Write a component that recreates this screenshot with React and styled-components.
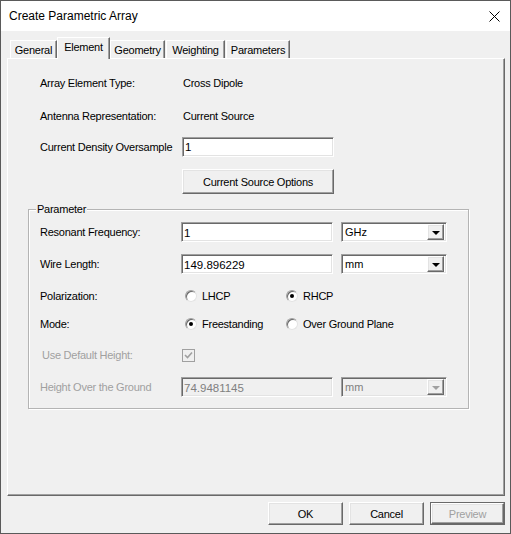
import React from "react";
import styled, { createGlobalStyle } from "styled-components";

const Global = createGlobalStyle`
  html, body { margin: 0; padding: 0; background: #f0f0f0; }
  * { box-sizing: border-box; }
  body { font-family: "Liberation Sans", Arial, sans-serif; font-size: 11px; color: #000; letter-spacing: -0.25px; }
`;

const Window = styled.div`
  width: 511px;
  height: 534px;
  border: 1px solid #5a5a5a;
  background: #f0f0f0;
  display: flex;
  flex-direction: column;
`;

const TitleBar = styled.div`
  height: 30px;
  background: #fff;
  display: flex;
  align-items: center;
  justify-content: space-between;
  padding: 0 10px 0 8px;
  font-size: 12px;
  letter-spacing: 0;
  flex-shrink: 0;
`;

const Body = styled.div`
  flex: 1;
  display: flex;
  flex-direction: column;
  padding: 6px 5px 0 6px;
`;

const TabStrip = styled.div`
  display: flex;
  align-items: flex-end;
  height: 21px;
  padding-left: 3px;
  position: relative;
  z-index: 1;
`;

const Tab = styled.div`
  width: ${(p) => p.$w}px;
  margin-left: ${(p) => p.$ml || 0}px;
  height: ${(p) => (p.$active ? "22px" : "18px")};
  margin-bottom: ${(p) => (p.$active ? "-1px" : "0")};
  padding-bottom: ${(p) => (p.$active ? "3px" : "0")};
  display: flex;
  align-items: center;
  justify-content: center;
  background: #f0f0f0;
  border-top: 1px solid #fff;
  border-left: 1px solid #fff;
  border-right: 1px solid #696969;
  box-shadow: inset -1px 0 #a0a0a0;
  position: relative;
  z-index: ${(p) => (p.$active ? 2 : 1)};
`;

const Panel = styled.div`
  height: 438px;
  border: 1px solid;
  border-color: #fff #696969 #696969 #fff;
  box-shadow: inset -1px -1px #a0a0a0;
  padding: 14px 0 0 32px;
  display: flex;
  flex-direction: column;
`;

const Row = styled.div`
  display: flex;
  align-items: center;
  height: ${(p) => p.$h || 20}px;
  margin-top: ${(p) => p.$mt || 0}px;
  flex-shrink: 0;
`;

const Label = styled.div`
  width: ${(p) => p.$w || 142}px;
  flex-shrink: 0;
  color: ${(p) => (p.$disabled ? "#a0a0a0" : "#000")};
  padding-left: ${(p) => p.$pl || 0}px;
`;

const Value = styled.div`
  padding-left: 1px;
`;

const TextInput = styled.div`
  width: ${(p) => p.$w || 152}px;
  height: 20px;
  background: ${(p) => (p.$disabled ? "#f0f0f0" : "#fff")};
  color: ${(p) => (p.$disabled ? "#808080" : "#000")};
  border: 1px solid;
  border-color: #a0a0a0 #fff #fff #a0a0a0;
  box-shadow: inset 1px 1px #696969, inset -1px -1px #e3e3e3;
  padding: 1px 3px 0 2px;
  display: flex;
  align-items: center;
  font-size: 11.5px;
  letter-spacing: 0;
`;

const Combo = styled(TextInput)`
  width: 106px;
  margin-left: 8px;
  padding: 2px 2px 2px 3px;
  justify-content: space-between;
  font-size: 11px;
`;

const ArrowBtn = styled.div`
  width: 17px;
  height: 16px;
  background: #f0f0f0;
  border: 1px solid;
  border-color: #fff #696969 #696969 #fff;
  box-shadow: inset -1px -1px #a0a0a0, inset 1px 1px #e3e3e3;
  display: flex;
  align-items: center;
  justify-content: center;
`;

const Arrow = styled.div`
  width: 0;
  height: 0;
  border-left: 4px solid transparent;
  border-right: 4px solid transparent;
  border-top: 4px solid ${(p) => (p.$disabled ? "#a0a0a0" : "#000")};
  margin-top: 1px;
`;

const Button = styled.div`
  width: ${(p) => p.$w || 75}px;
  height: ${(p) => p.$h || 23}px;
  background: #f0f0f0;
  border: 1px solid;
  border-color: #fff #696969 #696969 #fff;
  box-shadow: inset -1px -1px #a0a0a0, inset 1px 1px #e3e3e3;
  display: flex;
  align-items: center;
  justify-content: center;
  color: ${(p) => (p.$disabled ? "#a0a0a0" : "#000")};
`;

const DefaultFrame = styled.div`
  border: 1px solid #696969;
  display: flex;
`;

const Group = styled.div`
  position: relative;
  width: 441px;
  height: 200px;
  margin: 15px 0 0 -12px;
  border: 1px solid #b4b4b4;
  box-shadow: 1px 1px 0 #fff, inset 1px 1px 0 #fff;
  padding: 12px 0 0 11px;
  display: flex;
  flex-direction: column;
`;

const Legend = styled.div`
  position: absolute;
  top: -7px;
  left: 7px;
  padding: 0 1px;
  background: #f0f0f0;
  line-height: 12px;
`;

const RadioOption = styled.div`
  width: ${(p) => p.$w || 101}px;
  display: flex;
  align-items: center;
  padding-left: 4px;
`;

const RadioCircle = styled.div`
  width: 12px;
  height: 12px;
  border-radius: 50%;
  background: #fff;
  border: 1px solid;
  border-color: #a0a0a0 #e3e3e3 #e3e3e3 #a0a0a0;
  box-shadow: inset 1px 1px 0 #696969;
  margin-right: 5px;
  display: flex;
  align-items: center;
  justify-content: center;
  &::after {
    content: "";
    width: 4px;
    height: 4px;
    border-radius: 50%;
    background: ${(p) => (p.$checked ? "#000" : "transparent")};
  }
`;

const CheckBox = styled.div`
  width: 13px;
  height: 13px;
  border: 1px solid #a0a0a0;
  background: #f0f0f0;
  display: flex;
  align-items: center;
  justify-content: center;
  margin-left: 1px;
`;

const ButtonRow = styled.div`
  display: flex;
  justify-content: flex-end;
  gap: 6px;
  margin-top: 6px;
`;

const CloseIcon = () => (
  <svg width="11" height="11" viewBox="0 0 11 11">
    <path d="M0.5 0.5 L10.5 10.5 M10.5 0.5 L0.5 10.5" stroke="#000" strokeWidth="1" />
  </svg>
);

const ComboBox = ({ value, disabled }) => (
  <Combo $disabled={disabled}>
    <span>{value}</span>
    <ArrowBtn>
      <Arrow $disabled={disabled} />
    </ArrowBtn>
  </Combo>
);

const tabs = [
  { name: "General", w: 47 },
  { name: "Element", w: 53, active: true },
  { name: "Geometry", w: 55 },
  { name: "Weighting", w: 59, ml: 1 },
  { name: "Parameters", w: 64, ml: 1 },
];

export default function App() {
  return (
    <>
      <Global />
      <Window>
        <TitleBar>
          <span>Create Parametric Array</span>
          <CloseIcon />
        </TitleBar>
        <Body>
          <TabStrip>
            {tabs.map((t) => (
              <Tab key={t.name} $w={t.w} $ml={t.ml} $active={t.active}>{t.name}</Tab>
            ))}
          </TabStrip>
          <Panel>
            <Row>
              <Label>Array Element Type:</Label>
              <Value>Cross Dipole</Value>
            </Row>
            <Row $mt={13}>
              <Label>Antenna Representation:</Label>
              <Value>Current Source</Value>
            </Row>
            <Row $mt={10} $h={21}>
              <Label>Current Density Oversample</Label>
              <TextInput $w={152}>1</TextInput>
            </Row>
            <Row $mt={12} $h={25}>
              <Label />
              <Button $w={152} $h={25}>Current Source Options</Button>
            </Row>
            <Group>
              <Legend>Parameter</Legend>
              <Row>
                <Label $w={141}>Resonant Frequency:</Label>
                <TextInput>1</TextInput>
                <ComboBox value="GHz" />
              </Row>
              <Row $mt={12}>
                <Label $w={141}>Wire Length:</Label>
                <TextInput>149.896229</TextInput>
                <ComboBox value="mm" />
              </Row>
              <Row $mt={12}>
                <Label $w={141}>Polarization:</Label>
                <RadioOption>
                  <RadioCircle />
                  LHCP
                </RadioOption>
                <RadioOption>
                  <RadioCircle $checked />
                  RHCP
                </RadioOption>
              </Row>
              <Row $mt={8}>
                <Label $w={141}>Mode:</Label>
                <RadioOption>
                  <RadioCircle $checked />
                  Freestanding
                </RadioOption>
                <RadioOption $w={160}>
                  <RadioCircle />
                  Over Ground Plane
                </RadioOption>
              </Row>
              <Row $mt={11}>
                <Label $w={141} $disabled $pl={2}>Use Default Height:</Label>
                <CheckBox>
                  <svg width="9" height="9" viewBox="0 0 9 9">
                    <path d="M1 4 L3.5 6.5 L8 1.5" stroke="#a0a0a0" strokeWidth="1.6" fill="none" />
                  </svg>
                </CheckBox>
              </Row>
              <Row $mt={12}>
                <Label $w={141} $disabled>Height Over the Ground</Label>
                <TextInput $disabled>74.9481145</TextInput>
                <ComboBox value="mm" disabled />
              </Row>
            </Group>
          </Panel>
          <ButtonRow>
            <Button>OK</Button>
            <Button>Cancel</Button>
            <DefaultFrame>
              <Button $w={73} $h={21} $disabled>Preview</Button>
            </DefaultFrame>
          </ButtonRow>
        </Body>
      </Window>
    </>
  );
}
